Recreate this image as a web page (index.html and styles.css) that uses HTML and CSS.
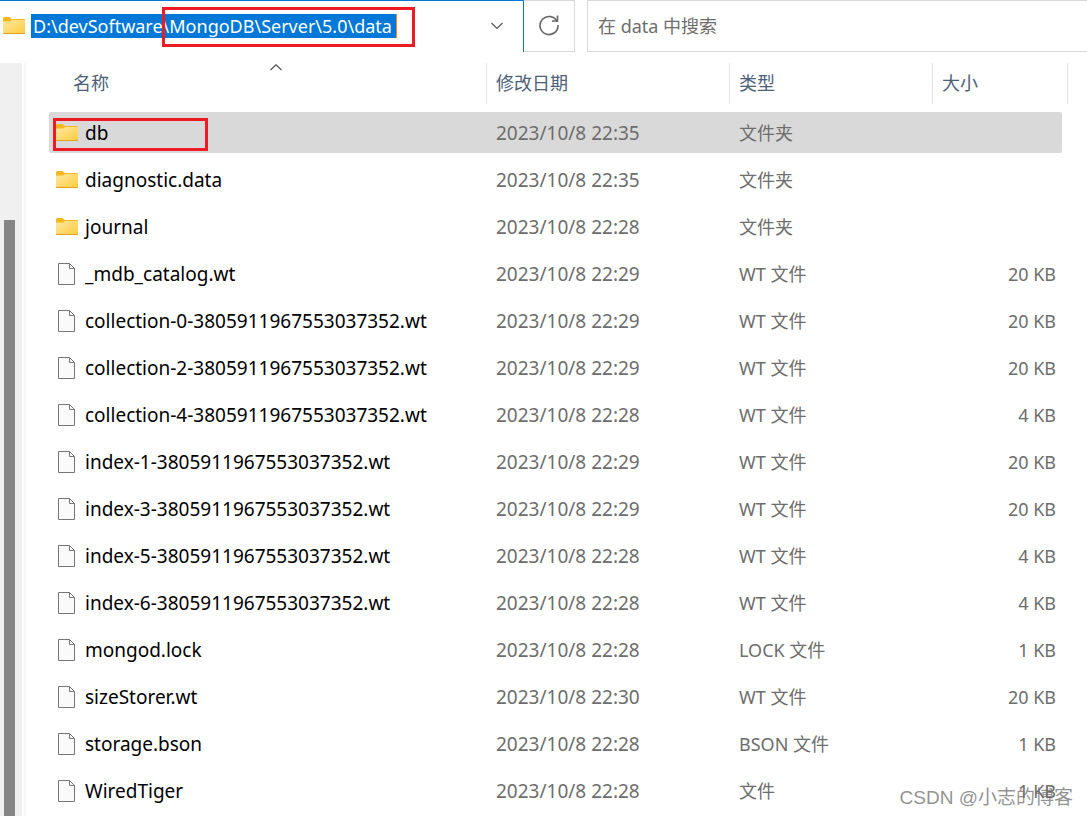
FILE: index.html
```
<!DOCTYPE html>
<html lang="zh-CN">
<head>
<meta charset="utf-8">
<title>data</title>
<link rel="stylesheet" href="styles.css">
</head>
<body>
<svg class="sprites" aria-hidden="true">
  <defs>
    <linearGradient id="fold" x1="0" y1="0" x2="1" y2="1">
      <stop offset="0" stop-color="#ffe8a3"/>
      <stop offset="1" stop-color="#ffcb3d"/>
    </linearGradient>
    <symbol id="folder" viewBox="0 0 22 18">
      <path d="M0 1.5Q0 0 1.500 0H6.500L8.500 2H21Q22 2 22 3V8H0Z" fill="#f5b61e"/>
      <path d="M0 4.500H7L9 3H22V16Q22 17 21 17H1Q0 17 0 16Z" fill="url(#fold)"/>
      <path d="M0 16H22Q22 17 21 17H1Q0 17 0 16Z" fill="#e0a21c"/>
    </symbol>
    <symbol id="file" viewBox="0 0 18 22">
      <path d="M.5.5H11.500L16.500 5.500V21.500H.5Z" fill="#fafafa" stroke="#757575"/>
      <path d="M11.500.5V5.500H16.500" fill="none" stroke="#757575"/>
    </symbol>
  </defs>
</svg>
<header class="toolbar">
  <div class="address">
    <svg class="folder"><use href="#folder"/></svg>
    <input class="path" type="text" aria-label="地址" value="D:\devSoftware\MongoDB\Server\5.0\data">
    <span class="mark mark-path"></span>
    <button class="drop" type="button" aria-label="历史记录">
      <svg width="12" height="8" viewBox="0 0 12 8"><path d="M.5 1L6 6.500L11.500 1" fill="none" stroke="#555" stroke-width="1.200"/></svg>
    </button>
  </div>
  <button class="refresh" type="button" aria-label="刷新">
    <svg width="22" height="22" viewBox="0 0 22 22" fill="none" stroke="#666" stroke-width="1.600"><path d="M19.300 8A9 9 0 1 0 20 11"/><path d="M19.500 1.500V7H14"/></svg>
  </button>
  <input class="search" type="search" aria-label="搜索" placeholder="在 data 中搜索">
</header>
<main class="content">
  <div class="nav"><div class="thumb"></div></div>
  <table class="files">
    <colgroup><col><col class="col-date"><col class="col-type"><col class="col-size"></colgroup>
    <thead>
      <tr>
        <th class="name-head"><span>名称</span><svg class="sort" width="12" height="7" viewBox="0 0 12 7"><path d="M.5 6L6 .8L11.500 6" fill="none" stroke="#555" stroke-width="1.200"/></svg></th>
        <th><span>修改日期</span></th><th><span>类型</span></th><th class="last"><span>大小</span></th>
      </tr>
    </thead>
    <tbody>
      <tr class="selected"><td><div class="name"><svg class="folder"><use href="#folder"/></svg>db<span class="mark mark-db"></span></div></td><td>2023/10/8 22:35</td><td class="type">文件夹</td><td></td></tr>
      <tr><td><div class="name"><svg class="folder"><use href="#folder"/></svg>diagnostic.data</div></td><td>2023/10/8 22:35</td><td class="type">文件夹</td><td></td></tr>
      <tr><td><div class="name"><svg class="folder"><use href="#folder"/></svg>journal</div></td><td>2023/10/8 22:28</td><td class="type">文件夹</td><td></td></tr>
      <tr><td><div class="name"><svg class="file"><use href="#file"/></svg>_mdb_catalog.wt</div></td><td>2023/10/8 22:29</td><td class="type">WT 文件</td><td class="size">20 KB</td></tr>
      <tr><td><div class="name"><svg class="file"><use href="#file"/></svg>collection-0-3805911967553037352.wt</div></td><td>2023/10/8 22:29</td><td class="type">WT 文件</td><td class="size">20 KB</td></tr>
      <tr><td><div class="name"><svg class="file"><use href="#file"/></svg>collection-2-3805911967553037352.wt</div></td><td>2023/10/8 22:29</td><td class="type">WT 文件</td><td class="size">20 KB</td></tr>
      <tr><td><div class="name"><svg class="file"><use href="#file"/></svg>collection-4-3805911967553037352.wt</div></td><td>2023/10/8 22:28</td><td class="type">WT 文件</td><td class="size">4 KB</td></tr>
      <tr><td><div class="name"><svg class="file"><use href="#file"/></svg>index-1-3805911967553037352.wt</div></td><td>2023/10/8 22:29</td><td class="type">WT 文件</td><td class="size">20 KB</td></tr>
      <tr><td><div class="name"><svg class="file"><use href="#file"/></svg>index-3-3805911967553037352.wt</div></td><td>2023/10/8 22:29</td><td class="type">WT 文件</td><td class="size">20 KB</td></tr>
      <tr><td><div class="name"><svg class="file"><use href="#file"/></svg>index-5-3805911967553037352.wt</div></td><td>2023/10/8 22:28</td><td class="type">WT 文件</td><td class="size">4 KB</td></tr>
      <tr><td><div class="name"><svg class="file"><use href="#file"/></svg>index-6-3805911967553037352.wt</div></td><td>2023/10/8 22:28</td><td class="type">WT 文件</td><td class="size">4 KB</td></tr>
      <tr><td><div class="name"><svg class="file"><use href="#file"/></svg>mongod.lock</div></td><td>2023/10/8 22:28</td><td class="type">LOCK 文件</td><td class="size">1 KB</td></tr>
      <tr><td><div class="name"><svg class="file"><use href="#file"/></svg>sizeStorer.wt</div></td><td>2023/10/8 22:30</td><td class="type">WT 文件</td><td class="size">20 KB</td></tr>
      <tr><td><div class="name"><svg class="file"><use href="#file"/></svg>storage.bson</div></td><td>2023/10/8 22:28</td><td class="type">BSON 文件</td><td class="size">1 KB</td></tr>
      <tr><td><div class="name"><svg class="file"><use href="#file"/></svg>WiredTiger</div></td><td>2023/10/8 22:28</td><td class="type">文件</td><td class="size">1 KB</td></tr>
    </tbody>
  </table>
</main>
<div class="watermark">CSDN @小志的博客</div>
</body>
</html>
```
FILE: styles.css
```
* { box-sizing: border-box; }

body {
  margin: 0;
  height: 100vh;
  overflow: hidden;
  display: flex;
  flex-direction: column;
  background: #fff;
  color: #000;
  font: 19px/24px "Noto Sans", "Noto Sans CJK SC", sans-serif;
}

button, input { font: inherit; border: 0; padding: 0; margin: 0; background: none; }
svg { flex: none; display: block; }
.sprites { position: absolute; width: 0; height: 0; }

.toolbar { display: flex; height: 52px; flex: none; }

.address {
  position: relative;
  width: 524px;
  display: flex;
  align-items: center;
  padding: 0 0 2px 3px;
  border-top: 1px solid #0078d7;
  border-right: 1px solid #0078d7;
}

.folder { width: 22px; height: 18px; }
.file { width: 18px; height: 22px; margin-left: 2px; }

.path {
  field-sizing: content;
  height: 24px;
  margin-left: 6px;
  padding: 0 4px 0 2px;
  background: #0078d7;
  color: #fff;
  font-size: 18px;
  border-right: 1px solid #ff8728;
}

.drop { margin-left: auto; padding: 8px 20px 8px 8px; }

.refresh {
  width: 51px;
  display: flex;
  align-items: center;
  justify-content: center;
  padding-bottom: 2px;
  border: 1px solid #d9d9d9;
  border-left: 0;
}

.search {
  flex: 1;
  min-width: 0;
  margin-left: 12px;
  padding-left: 10px;
  border: 1px solid #d9d9d9;
  border-right: 0;
  font-size: 18px;
  appearance: none;
}
.search::placeholder { color: #6d6d6d; opacity: 1; }

.mark { position: absolute; border: 3px solid #ed1c24; pointer-events: none; }
.mark-path { left: 162px; top: 6px; width: 253px; height: 40px; }
.mark-db { left: 4px; top: 6px; width: 155px; height: 33px; }

.content { flex: 1; min-height: 0; display: flex; align-items: flex-start; }

.nav {
  width: 26px;
  flex: none;
  align-self: stretch;
  margin: 11px 23px 0 0;
  display: flex;
  padding: 157px 0 0 4px;
  background: linear-gradient(to right, #f0f0f0 22px, #fff 22px, #fff 24px, #f7f7f7 24px);
}
.thumb { width: 11px; background: #858585; }

.files {
  flex: 1;
  table-layout: fixed;
  margin: 5px 25px 0 0;
  border-spacing: 0 6px;
}
.col-date { width: 243px; }
.col-type { width: 203px; }
.col-size { width: 130px; }

th {
  position: relative;
  height: 43px;
  padding: 0 0 2px;
  text-align: left;
  font-size: 18px;
  font-weight: 400;
  color: #4c607a;
}
th span { display: block; padding-left: 9px; line-height: 41px; border-left: 1px solid #e5e5e5; }
.name-head span { padding-left: 24px; border-left: 0; }
.last::after { content: ""; position: absolute; top: 0; right: -6px; width: 1px; height: 41px; background: #e5e5e5; }
.sort { position: absolute; left: 50%; top: 1px; margin-left: 2px; }

td { height: 41px; padding: 0 0 0 10px; color: #6d6d6d; white-space: nowrap; }
td:first-child { padding: 0; color: #000; }
.files .type { font-size: 18px; }
.files .size { font-size: 18px; text-align: right; padding-right: 6px; }
.name { position: relative; display: flex; align-items: center; height: 41px; padding-left: 7px; gap: 7px; }
.name .file { margin-right: 2px; }
.selected td { background: #d9d9d9; }
.selected td:first-child { border-radius: 2px 0 0 2px; }
.selected td:last-child { border-radius: 0 2px 2px 0; }

.watermark {
  position: absolute;
  right: 14px;
  bottom: 6px;
  font: 19px/24px "Liberation Sans", "Noto Sans CJK SC", sans-serif;
  color: rgba(110, 110, 110, 0.75);
}
```
